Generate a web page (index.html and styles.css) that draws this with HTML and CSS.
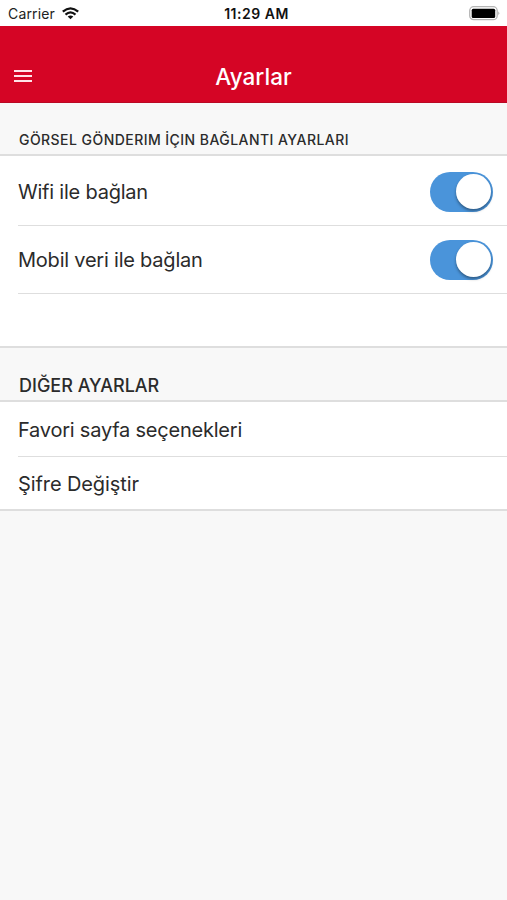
FILE: index.html
```html
<!DOCTYPE html>
<html lang="tr">
<head>
<meta charset="utf-8">
<title>Ayarlar</title>
<link rel="stylesheet" href="styles.css">
</head>
<body>
<div class="status">
  <div class="carrier"><span>Carrier</span>
    <svg class="wifi" width="17" height="13" viewBox="0 0 17 13" fill="none" stroke="#111" stroke-width="2.2"><path d="M.8 4.700Q8.500-1.900 16.200 4.700M3.500 7.600Q8.500 3.200 13.500 7.600"/><path d="M5.700 9.500Q8.500 7.300 11.300 9.500L8.500 12.300Z" fill="#111" stroke="none"/></svg>
  </div>
  <span class="time">11:29 AM</span>
  <svg class="battery" width="33" height="16" viewBox="0 0 33 16"><rect x="1.700" y="0.700" width="27.500" height="13" rx="4" fill="#fff" stroke="#b5b5b5" stroke-width="1.300"/><rect x="3.700" y="2.700" width="23.500" height="9.300" rx="1.500" fill="#000"/><path d="M30.500 5.300Q32.200 7.200 30.500 9.200Z" fill="#888"/></svg>
</div>
<header class="nav">
  <svg class="menu" width="18" height="14" viewBox="0 0 18 14"><path d="M0 2H18M0 7H18M0 12H18" stroke="#ffe3e8" stroke-width="2"/></svg>
  <h1>Ayarlar</h1>
  <span></span>
</header>
<main>
  <h2 class="heading small"><span>GÖRSEL GÖNDERIM İÇIN BAĞLANTI AYARLARI</span></h2>
  <section class="group connection">
    <div class="row"><span>Wifi ile bağlan</span><span class="toggle"></span></div>
    <div class="row"><span>Mobil veri ile bağlan</span><span class="toggle"></span></div>
  </section>
  <h2 class="heading"><span>DIĞER AYARLAR</span></h2>
  <section class="group other">
    <div class="row"><span>Favori sayfa seçenekleri</span></div>
    <div class="row"><span>Şifre Değiştir</span></div>
  </section>
</main>
</body>
</html>
```
FILE: styles.css
```css
* { box-sizing: border-box; }
body { margin: 0; height: 900px; background: #f8f8f8; color: #2b2b2b; font-family: Inter, "Liberation Sans", sans-serif; overflow: hidden; }
.status { height: 26px; background: #fff; display: grid; grid-template-columns: 1fr auto 1fr; align-items: center; padding: 1px 6px 0 8px; }
.carrier { display: flex; align-items: center; gap: 7px; font-size: 14px; letter-spacing: .15px; color: #222; }
.time { font-size: 14px; letter-spacing: .5px; font-weight: 600; color: #111; margin-left: 4px; }
.battery { justify-self: end; }
.nav { height: 77px; background: #d50525; border-bottom: 1px solid #b90924; display: grid; grid-template-columns: 1fr auto 1fr; align-items: center; padding: 26px 14px 0; color: #fff; }
.menu { margin-top: -2px; }
.nav h1 { margin: 0; font-size: 22.500px; letter-spacing: .05px; line-height: 28px; font-weight: 500; }
.heading { margin: 0; height: 52px; display: flex; align-items: flex-end; padding: 0 19px 3px; font-size: 18px; line-height: 22px; font-weight: 500; }
.heading.small { height: 51px; font-size: 14px; letter-spacing: .45px; line-height: 20px; padding: 0 19px 4px; }
.group { background: #fff; border-top: 2px solid #dedede; border-bottom: 2px solid #dedede; padding-left: 18px; }
.row { display: flex; align-items: center; justify-content: space-between; border-bottom: 1px solid #dedede; font-size: 20px; letter-spacing: -.22px; line-height: 26px; padding-right: 14px; }
.connection { height: 194px; }
.connection .row { height: 70px; padding-top: 2px; }
.connection .row + .row { height: 68px; padding-top: 1px; }
.other { height: 111px; }
.other .row { height: 55px; padding-top: 2px; }
.other .row + .row { height: 52px; border: 0; letter-spacing: -.1px; }
.toggle { width: 63px; height: 40px; border-radius: 20px; background: #4a94da; padding: 2px; display: flex; justify-content: flex-end; }
.toggle::after { content: ""; width: 35px; height: 35px; border-radius: 50%; background: #fff; box-shadow: 0 2px 3px rgba(0,0,0,.38); }
```
